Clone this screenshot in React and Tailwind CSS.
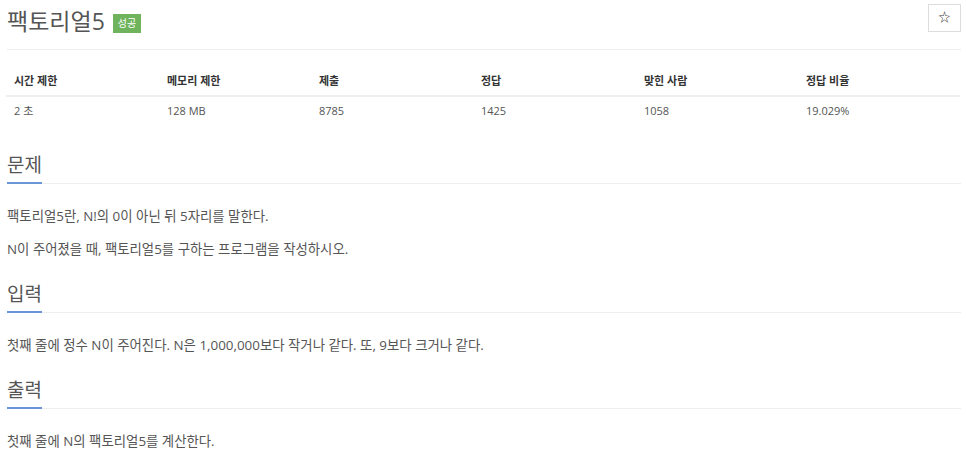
const stats = [
  { label: '시간 제한', value: '2 초', w: 'w-[153px]' },
  { label: '메모리 제한', value: '128 MB', w: 'w-[152px]' },
  { label: '제출', value: '8785', w: 'w-[162px]' },
  { label: '정답', value: '1425', w: 'w-[163px]' },
  { label: '맞힌 사람', value: '1058', w: 'w-[162px]' },
  { label: '정답 비율', value: '19.029%', w: 'flex-1' },
];

function Section({ title, children }) {
  return (
    <section>
      <div className="border-b border-[#eeeeee] flex">
        <h2 className="text-[19px] leading-[26px] text-[#555] pb-[4px] border-b-2 border-[#6a95d6] -mb-px">{title}</h2>
      </div>
      <div className="pt-[23px] pb-[22px] flex flex-col gap-[14px] text-[13.4px] leading-[19px] text-[#555]">
        {children}
      </div>
    </section>
  );
}

export default function App() {
  return (
    <div className="bg-white min-h-screen px-[7px] pt-[5px]" style={{ fontFamily: '"Open Sans", "Noto Sans CJK KR", sans-serif' }}>
      <div className="flex items-start justify-between border-b border-[#eeeeee] pb-[14px] w-[954px]">
        <div className="flex items-center gap-[8px] pt-[2px]">
          <h1 className="text-[23px] leading-[28px] text-[#555]">팩토리얼5</h1>
          <span className="bg-[#6fb35d] text-white text-[10px] leading-[19px] px-[5px] mt-[4px]">성공</span>
        </div>
        <button className="w-[33px] h-[28px] -mt-px border border-[#dddddd] bg-white flex items-center justify-center text-[12px] text-[#333]">
          ☆
        </button>
      </div>

      <div className="mt-[15px] w-[954px] -ml-px">
        <div className="flex border-b-2 border-[#eeeeee]">
          {stats.map((s) => (
            <div key={s.label} className={`${s.w} px-[8px] pt-[8px] pb-[6px] text-[11px] leading-[16px] font-bold text-[#333]`}>
              {s.label}
            </div>
          ))}
        </div>
        <div className="flex">
          {stats.map((s) => (
            <div key={s.label} className={`${s.w} px-[8px] pt-[6px] pb-[4px] text-[11px] leading-[16px] text-[#555]`}>
              {s.value}
            </div>
          ))}
        </div>
      </div>

      <div className="mt-[29px] w-[954px]">
        <Section title="문제">
          <p>팩토리얼5란, N!의 0이 아닌 뒤 5자리를 말한다.</p>
          <p>N이 주어졌을 때, 팩토리얼5를 구하는 프로그램을 작성하시오.</p>
        </Section>
        <Section title="입력">
          <p>첫째 줄에 정수 N이 주어진다. N은 1,000,000보다 작거나 같다. 또, 9보다 크거나 같다.</p>
        </Section>
        <Section title="출력">
          <p>첫째 줄에 N의 팩토리얼5를 계산한다.</p>
        </Section>
      </div>
    </div>
  );
}
